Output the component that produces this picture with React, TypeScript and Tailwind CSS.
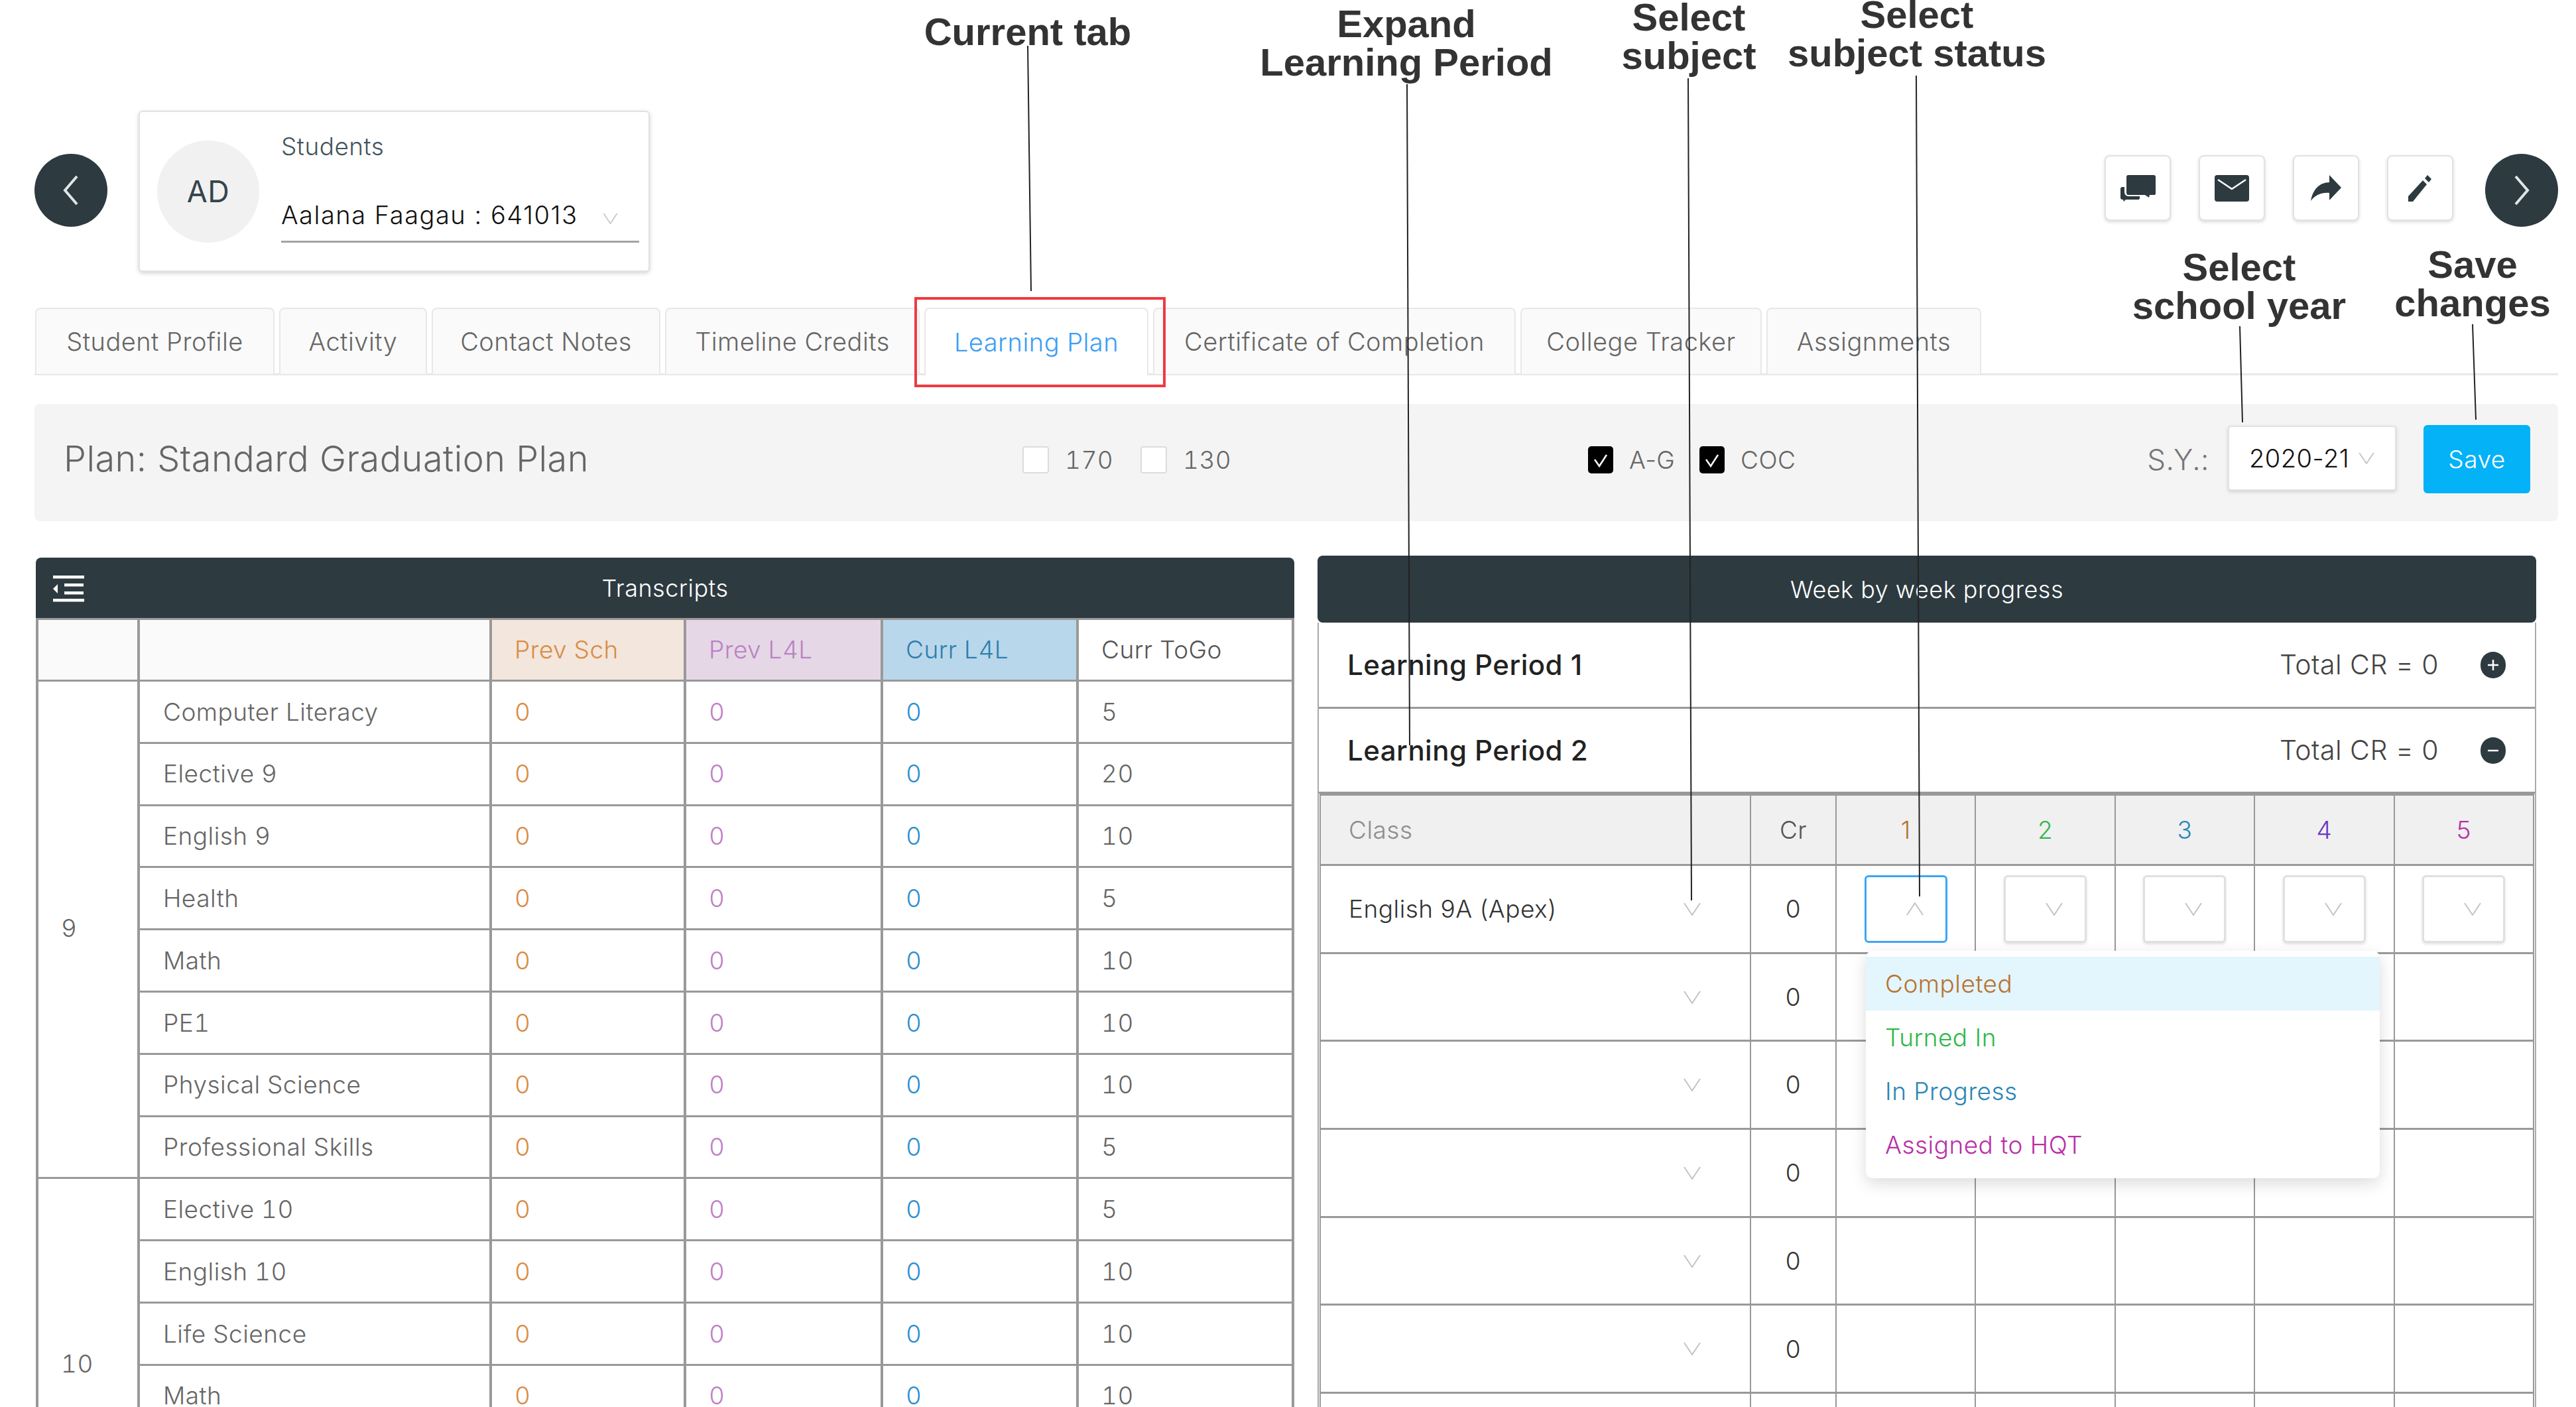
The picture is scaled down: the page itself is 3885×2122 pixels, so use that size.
const font = 'font-["Inter","Noto_Sans",sans-serif]';

const transcriptRows: { grade?: string; span?: number; name: string; togo: string }[] = [
  { grade: '9', span: 8, name: 'Computer Literacy', togo: '5' },
  { name: 'Elective 9', togo: '20' },
  { name: 'English 9', togo: '10' },
  { name: 'Health', togo: '5' },
  { name: 'Math', togo: '10' },
  { name: 'PE1', togo: '10' },
  { name: 'Physical Science', togo: '10' },
  { name: 'Professional Skills', togo: '5' },
  { grade: '10', span: 6, name: 'Elective 10', togo: '5' },
  { name: 'English 10', togo: '10' },
  { name: 'Life Science', togo: '10' },
  { name: 'Math', togo: '10' },
  { name: '', togo: '' },
  { name: '', togo: '' },
];

const tabs = [
  { label: 'Student Profile', w: 'w-[361px]' },
  { label: 'Activity', w: 'w-[223px]' },
  { label: 'Contact Notes', w: 'w-[345px]' },
  { label: 'Timeline Credits', w: 'w-[384px]' },
  { label: 'Learning Plan', w: 'w-[338px]', active: true },
  { label: 'Certificate of Completion', w: 'w-[547px]' },
  { label: 'College Tracker', w: 'w-[364px]' },
  { label: 'Assignments', w: 'w-[324px]' },
];

const weekCols = [
  { n: '1', c: 'text-[#b8732f]' },
  { n: '2', c: 'text-[#2fb84a]' },
  { n: '3', c: 'text-[#2b86b5]' },
  { n: '4', c: 'text-[#6a38c2]' },
  { n: '5', c: 'text-[#b92fa8]' },
];

const statusItems = [
  { label: 'Completed', c: 'text-[#b8732f] bg-[#e3f5fd]' },
  { label: 'Turned In', c: 'text-[#2fb84a]' },
  { label: 'In Progress', c: 'text-[#2b86b5]' },
  { label: 'Assigned to HQT', c: 'text-[#b92fa8]' },
];

function Chevron({ up, className }: { up?: boolean; className: string }) {
  return (
    <svg viewBox="0 0 26 20" className={className} fill="none" stroke="currentColor" strokeWidth="2">
      <polyline points={up ? '1,19 13,1 25,19' : '1,1 13,19 25,1'} />
    </svg>
  );
}

function RoundNav({ right }: { right?: boolean }) {
  return (
    <div className="w-[110px] h-[110px] mb-[4px] rounded-full bg-[#2d3a40] flex items-center justify-center shrink-0">
      <svg viewBox="0 0 24 46" className="w-[24px] h-[46px]" fill="none" stroke="#dfe6e8" strokeWidth="4">
        <polyline points={right ? '3,2 21,23 3,44' : '21,2 3,23 21,44'} />
      </svg>
    </div>
  );
}

function IconBtn({ children }: { children: React.ReactNode }) {
  return (
    <button className="w-[100px] h-[99px] bg-white rounded-[8px] border-2 border-[#e2e2e2] shadow-[0_2px_5px_rgba(0,0,0,.15)] flex items-center justify-center">
      {children}
    </button>
  );
}

function Check({ on, label, className }: { on?: boolean; label: string; className: string }) {
  return (
    <div className={`flex items-center gap-[24px] mb-[8px] ${className}`}>
      {on ? (
        <span className="w-[38px] h-[41px] rounded-[5px] bg-black flex items-center justify-center">
          <svg viewBox="0 0 24 24" className="w-[24px] h-[24px]" fill="none" stroke="#fff" strokeWidth="2.5">
            <polyline points="3,11 10,21 21,4" />
          </svg>
        </span>
      ) : (
        <span className="w-[40px] h-[41px] rounded-[4px] bg-white border-2 border-[#dcdcdc]" />
      )}
      <span className={`text-[37px] font-light text-[#666] ${on ? '' : 'tabular-nums'}`}>{label}</span>
    </div>
  );
}

function Callout({ lines, className }: { lines: string[]; className: string }) {
  return (
    <div className={`absolute -translate-x-1/2 text-center whitespace-nowrap tracking-normal font-["Liberation_Sans",Arial,sans-serif] font-bold text-[#333] text-[58px] leading-[58px] ${className}`}>
      {lines.map((l) => <div key={l}>{l}</div>)}
    </div>
  );
}

function Transcripts() {
  const line = 'border-[#999] border-y-[3px] border-x-[4px]';
  return (
    <div className="w-[1898px] ml-[2px] mt-[3px] shrink-0">
      <div className="relative h-[91px] bg-[#2d3a40] rounded-t-[8px] flex items-center justify-center text-white text-[36px] font-light">
        <svg viewBox="0 0 48 40" className="absolute left-[26px] top-[27px] w-[48px] h-[40px]" fill="#fff">
          <rect x="0" y="0" width="47" height="4.5" />
          <rect x="17" y="12" width="29" height="4.5" />
          <rect x="17" y="24" width="29" height="4.5" />
          <rect x="0" y="35" width="47" height="4.5" />
          <polygon points="0,20 7,13 7,27" />
        </svg>
        Transcripts
      </div>
      <table className="table-fixed border-collapse w-[1894px] text-[37px] font-light tabular-nums">
        <colgroup>
          <col className="w-[153px]" />
          <col className="w-[531px]" />
          <col className="w-[293px]" />
          <col className="w-[297px]" />
          <col className="w-[295px]" />
          <col className="w-[325px]" />
        </colgroup>
        <thead>
          <tr className="h-[93px]">
            <th className={`${line} bg-[#fafafa]`} />
            <th className={`${line} bg-[#fafafa]`} />
            <th className={`${line} bg-[#f3e6dc] text-left font-light pl-[34px] text-[#d98c46]`}>Prev Sch</th>
            <th className={`${line} bg-[#e6d7e6] text-left font-light pl-[34px] text-[#b983c3]`}>Prev L4L</th>
            <th className={`${line} bg-[#b9d7ea] text-left font-light pl-[34px] text-[#2e7fb0]`}>Curr L4L</th>
            <th className={`${line} bg-white text-left font-light pl-[34px] text-[#555]`}>Curr ToGo</th>
          </tr>
        </thead>
        <tbody>
          {transcriptRows.map((r, i) => (
            <tr key={i} className="h-[93.8px]">
              {r.grade && <td rowSpan={r.span} className={`${line} pl-[34px] pb-[4px] text-[#666]`}>{r.grade}</td>}
              <td className={`${line} pl-[35px] text-[#666]`}>{r.name}</td>
              <td className={`${line} pl-[34px] text-[#d98c46]`}>0</td>
              <td className={`${line} pl-[34px] text-[#c080c8]`}>0</td>
              <td className={`${line} pl-[34px] text-[#2e8fd0]`}>0</td>
              <td className={`${line} pl-[34px] text-[#666]`}>{r.togo}</td>
            </tr>
          ))}
        </tbody>
      </table>
    </div>
  );
}

function PeriodRow({ title, open }: { title: string; open?: boolean }) {
  return (
    <div className={`flex items-center pl-[43px] pr-[44px] border-b-[3px] border-[#999] ${open ? 'h-[128px]' : 'h-[130px]'}`}>
      <span className="text-[42px] font-medium text-[#222]">{title}</span>
      <span className="ml-auto text-[41px] font-light text-[#444] mr-[63px]">Total CR = 0</span>
      <span className="w-[38px] h-[40px] rounded-full bg-[#2d3a40] flex items-center justify-center">
        <svg viewBox="0 0 20 20" className="w-[20px] h-[20px]" stroke="#fff" strokeWidth="2.5">
          <line x1="2" y1="10" x2="18" y2="10" />
          {!open && <line x1="10" y1="2" x2="10" y2="18" />}
        </svg>
      </span>
    </div>
  );
}

function WeekProgress() {
  const cell = 'border-[#999] border-y-[3px] border-x-2';
  return (
    <div className="relative w-[1838px] ml-[35px] shrink-0">
      <div className="h-[101px] bg-[#2d3a40] rounded-[8px] flex items-center justify-center text-white text-[36px] font-light">
        Week by week progress
      </div>
      <div className="border-x-2 border-[#aaa] h-[1300px]">
        <PeriodRow title="Learning Period 1" />
        <PeriodRow title="Learning Period 2" open />
        <table className="table-fixed border-collapse w-[1830px] ml-[1px] text-[37px] font-light">
          <colgroup>
            <col className="w-[649px]" />
            <col className="w-[129px]" />
            <col className="w-[210.4px]" span={5} />
          </colgroup>
          <thead>
            <tr className="h-[106px] bg-[#f0f0f0]">
              <th className={`${cell} text-left font-light pl-[42px] text-[#8e8e8e]`}>Class</th>
              <th className={`${cell} font-light text-[#555]`}>Cr</th>
              {weekCols.map((w) => <th key={w.n} className={`${cell} font-light ${w.c}`}>{w.n}</th>)}
            </tr>
          </thead>
          <tbody>
            {[0, 1, 2, 3, 4, 5, 6, 7].map((row) => (
              <tr key={row} className="h-[132.7px]">
                <td className={`${cell} pl-[42px] text-[#333]`}>
                  <div className="flex items-center justify-between pr-[74px]">
                    <span>{row === 0 ? 'English 9A (Apex)' : ''}</span>
                    <Chevron className="w-[26px] h-[20px] text-[#c4c4c4]" />
                  </div>
                </td>
                <td className={`${cell} text-center text-[#333]`}>0</td>
                {weekCols.map((w, i) => (
                  <td key={w.n} className={cell}>
                    {row === 0 && (
                      <div className={`mx-auto w-[125px] h-[102px] bg-white rounded-[6px] flex items-center justify-end pr-[33px] ${i === 0 ? 'border-[3px] border-[#3ea6f5]' : 'border-[3px] border-[#e0e0e0] shadow-[0_2px_4px_rgba(0,0,0,.12)]'}`}>
                        <Chevron up={i === 0} className="w-[26px] h-[20px] text-[#c4c4c4]" />
                      </div>
                    )}
                  </td>
                ))}
              </tr>
            ))}
          </tbody>
        </table>
      </div>
      <div className="absolute left-[827px] top-[596px] w-[775px] h-[343px] bg-white rounded-[10px] pt-[9px] shadow-[0_8px_24px_rgba(0,0,0,.14)] text-[37px] font-light">
        {statusItems.map((s) => (
          <div key={s.label} className={`h-[81px] flex items-center pl-[29px] ${s.c}`}>{s.label}</div>
        ))}
      </div>
    </div>
  );
}

export default function App() {
  return (
    <div className={`relative w-[3885px] h-[2122px] overflow-hidden bg-white pt-[167px] tracking-[.03em] ${font}`}>
      <div className="flex items-center pl-[52px] pr-[27px] h-[243px]">
        <RoundNav />
        <div className="ml-[47px] w-[771px] h-[243px] bg-white rounded-[6px] border-2 border-[#e2e2e2] shadow-[0_2px_6px_rgba(0,0,0,.18)] flex pl-[26px] pr-[14px] items-center">
          <div className="w-[154px] h-[154px] rounded-full bg-[#f1f1f1] flex items-center justify-center text-[45px] font-normal text-[#34444c] shrink-0">AD</div>
          <div className="ml-[33px] flex-1 h-full relative">
            <div className="pt-[30px] text-[37px] font-light leading-[44px] text-[#44555d]">Students</div>
            <div className="mt-[58px] pb-[16px] border-b-[3px] border-[#a3a3a3] flex items-center text-[38px] font-light leading-[46px] tracking-[.04em] text-[#111]">
              <span>Aalana Faagau : 641013</span>
              <Chevron className="w-[27px] h-[17px] ml-auto mr-[30px] mt-[10px] text-[#c4c4c4]" />
            </div>
          </div>
        </div>
        <div className="ml-auto flex items-center gap-[42px] mr-[48px] mb-[10px]">
          <IconBtn>
            <svg viewBox="0 0 53 40" className="w-[53px] h-[40px]" fill="#2d3a40">
              <path d="M12 0h38a3 3 0 0 1 3 3v25a2 2 0 0 1-2 2h-7l-1 4-6-4H12a3 3 0 0 1-3-3V3a3 3 0 0 1 3-3z" />
              <path d="M0 21a3 3 0 0 1 3-3h3v8a6 6 0 0 0 6 6h17v3a2 2 0 0 1-2 2H8l-3 3-1-3H3a3 3 0 0 1-3-3z" />
            </svg>
          </IconBtn>
          <IconBtn>
            <svg viewBox="0 0 52 40" className="w-[52px] h-[40px]">
              <rect width="52" height="40" rx="4" fill="#2d3a40" />
              <polyline points="5,7 26,21 47,7" fill="none" stroke="#fff" strokeWidth="2.5" />
            </svg>
          </IconBtn>
          <IconBtn>
            <svg viewBox="0 0 46 39" className="w-[46px] h-[39px]" fill="#2d3a40">
              <path d="M28 0 46 19 28 38V27C16 26 7 30 0 39 3 22 13 11 28 11Z" />
            </svg>
          </IconBtn>
          <IconBtn>
            <svg viewBox="0 0 36 40" className="w-[36px] h-[40px]" fill="#2d3a40">
              <path d="M0 32 22 8l6 6L7 40H0z" />
              <path d="M25 5l4-5 6 6-4 5z" />
            </svg>
          </IconBtn>
        </div>
        <RoundNav right />
      </div>

      <div className="mt-[54px] ml-[52px] mr-[27px] pl-[1px] flex gap-[7px] h-[102px] border-b-[3px] border-[#e8e8e8]">
        {tabs.map((t) => (
          <div
            key={t.label}
            className={`${t.w} h-[100px] rounded-t-[8px] border-x-2 border-t-2 border-[#e8e8e8] flex items-center justify-center text-[38px] font-light ${t.active ? 'bg-white h-[102px] text-[#3b9ef5]' : 'bg-[#fafafa] text-[#666]'}`}
          >
            {t.label}
          </div>
        ))}
      </div>

      <div className="mt-[43px] ml-[52px] mr-[27px] h-[177px] rounded-[8px] bg-[#f4f4f4] flex items-center pl-[44px] relative">
        <div className="w-[1446px] mb-[12px] text-[54px] font-light text-[#666]">Plan: Standard Graduation Plan</div>
        <Check label="170" className="w-[178px]" />
        <Check label="130" className="w-[675px]" />
        <Check on label="A-G" className="w-[168px]" />
        <Check on label="COC" className="w-[270px]" />
        <div className="ml-auto flex items-center mr-[42px]">
          <span className="mb-[10px] text-[44px] font-light text-[#777] mr-[28px]">S.Y.:</span>
          <div className="mb-[13px] w-[254px] h-[98px] bg-white rounded-[4px] border-2 border-[#e2e2e2] shadow-[0_2px_5px_rgba(0,0,0,.15)] flex items-center pl-[30px] text-[38px] font-light text-[#111]">
            2020-21
            <Chevron className="w-[24px] h-[18px] ml-auto mr-[31px] text-[#c4c4c4]" />
          </div>
          <button className="mb-[10px] ml-[41px] w-[161px] h-[103px] rounded-[6px] bg-[#03b2f7] text-white text-[37px] font-light">Save</button>
        </div>
      </div>

      <div className="mt-[52px] flex items-start ml-[52px]">
        <Transcripts />
        <WeekProgress />
      </div>

      <svg className="absolute left-0 top-0 pointer-events-none" width="3885" height="2122" stroke="#222" strokeWidth="2">
        <line x1="1550" y1="69" x2="1555" y2="439" />
        <line x1="2122" y1="127" x2="2126" y2="1124" />
        <line x1="2546" y1="118" x2="2551" y2="1358" />
        <line x1="2890" y1="114" x2="2895" y2="1352" />
        <line x1="3378" y1="492" x2="3382" y2="637" />
        <line x1="3729" y1="489" x2="3734" y2="633" />
      </svg>
      <div className="absolute left-[1379px] top-[448px] w-[379px] h-[136px] border-4 border-[#ee3a43]" />
      <Callout lines={['Current tab']} className="left-[1550px] top-[19px]" />
      <Callout lines={['Expand', 'Learning Period']} className="left-[2121px] top-[7px]" />
      <Callout lines={['Select', 'subject']} className="left-[2547px] top-[-3px]" />
      <Callout lines={['Select', 'subject status']} className="left-[2891px] top-[-7px]" />
      <Callout lines={['Select', 'school year']} className="left-[3377px] top-[374px]" />
      <Callout lines={['Save', 'changes']} className="left-[3729px] top-[370px]" />
    </div>
  );
}
